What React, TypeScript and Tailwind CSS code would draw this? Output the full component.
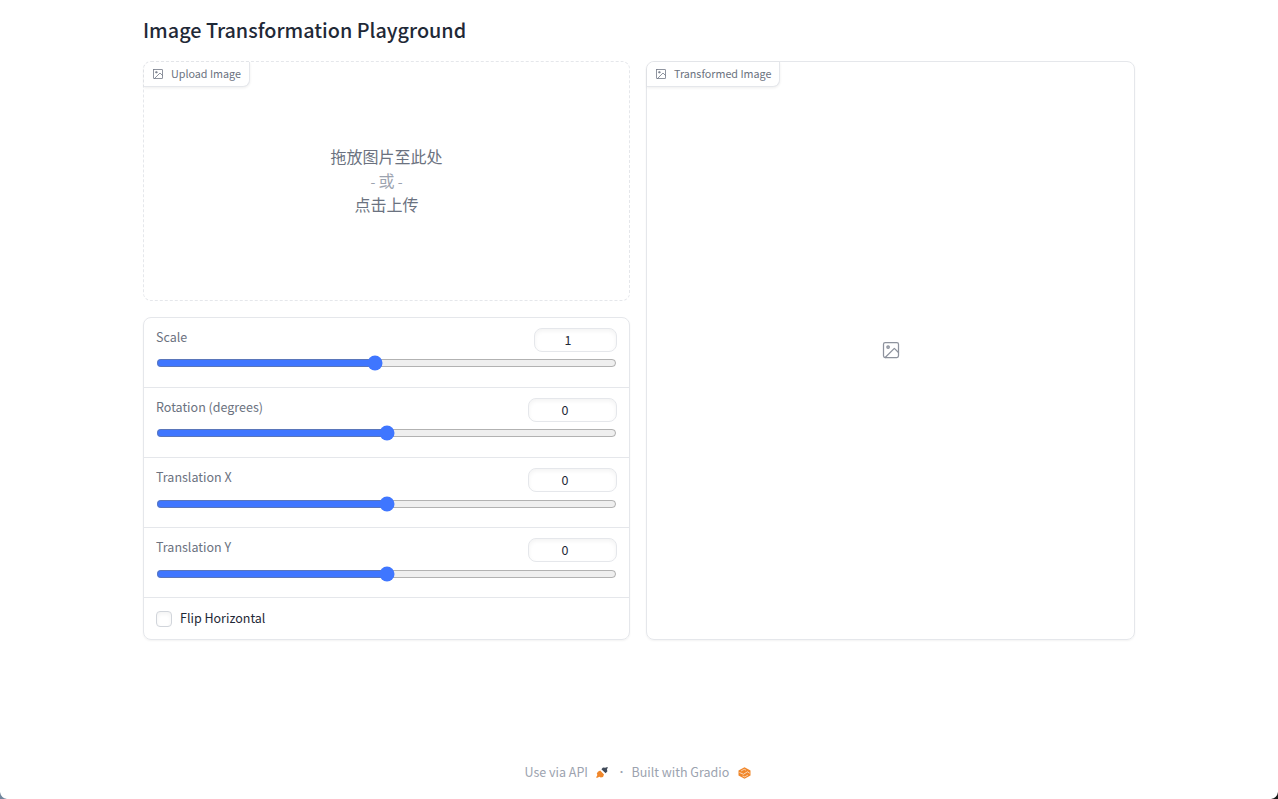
import React from 'react';

function ImageIcon({ className, radius = 2 }: { className: string; radius?: number }) {
  return (
    <svg
      className={className}
      viewBox="0 0 24 24"
      fill="none"
      stroke="currentColor"
      strokeWidth="1.5"
      strokeLinecap="round"
      strokeLinejoin="round"
    >
      <rect x="3" y="3" width="18" height="18" rx={radius} ry={radius} />
      <circle cx="8.5" cy="8.5" r="1.5" fill="currentColor" fillOpacity="0.5" />
      <polyline points="21 15 16 10 5 21" />
    </svg>
  );
}

function BlockLabel({ text, width }: { text: string; width: string }) {
  return (
    <div
      className={`${width} flex h-[25px] items-center rounded-tl-[7px] rounded-br-[7px] border-r border-b border-[#e5e7eb] bg-white pl-[8px] text-[#6b7280] shadow-[0_1px_3px_0_rgba(0,0,0,0.07)]`}
    >
      <ImageIcon className="mr-[7px] mb-[1px] size-[12px] text-[#6b7280]" radius={0.5} />
      <span className="text-[10.75px] leading-[18px] whitespace-nowrap">{text}</span>
    </div>
  );
}

interface SliderProps {
  label: string;
  min: number;
  max: number;
  step: number;
  value: number;
  boxWidth: string;
  gap: string;
}

function SliderRow({ label, min, max, step, value, boxWidth, gap }: SliderProps) {
  return (
    <div className="h-[70px] border-b border-[#e5e7eb] px-[12px] pt-[10px]">
      <div className="flex h-[24px] justify-between">
        <label className="text-[12.5px] leading-[17px] text-[#6b7280]">{label}</label>
        <input
          type="number"
          defaultValue={value}
          className={`${boxWidth} h-[24px] rounded-[8px] border border-[#e5e7eb] bg-white px-[8px] pb-[2px] text-center text-[12.5px] leading-[18px] text-[#1f2937] shadow-[inset_0_2px_4px_0_rgba(0,0,0,0.05)] outline-none`}
        />
      </div>
      <input
        type="range"
        min={min}
        max={max}
        step={step}
        defaultValue={value}
        className={`${gap} block h-[16px] w-[461px] accent-[#3f76ff]`}
      />
    </div>
  );
}

function RocketIcon() {
  return (
    <svg className="mt-[1px] ml-[7px] h-[11px] w-[12px]" viewBox="0 0 12 11">
      <path d="M5.4 2.2 L7 0.4 L9.2 0.8 L11.4 0 L11.8 0.6 L10.9 2.4 L11.4 4.2 L9.6 6.2 Z" fill="#374151" fillOpacity="0.95" />
      <path d="M1.9 4.8 L4.2 3.6 L8 7.4 L7 9.9 L4.8 10.5 L3.4 9.8 L0.8 10.9 L0.2 10.3 L1.4 8 L0.8 6.4 Z" fill="#f0872b" />
    </svg>
  );
}

function GradioIcon() {
  return (
    <svg className="mt-[1px] ml-[7px] h-[12px] w-[13px]" viewBox="0 0 26 24" fill="none">
      <path d="M13 0.5 L25 7 V17 L13 23.5 L1 17 V7 Z" fill="#f0872b" />
      <path d="M6 8 L12.5 4.6 L16 6.4" stroke="#fff" strokeWidth="1.4" strokeOpacity="0.85" />
      <path d="M3 11 L11 14.5 L19 9.5 L23.5 12.5" stroke="#fff" strokeWidth="1.6" strokeOpacity="0.85" />
      <path d="M9 18 L13.5 19.8 L20 16" stroke="#fff" strokeWidth="1.4" strokeOpacity="0.85" />
    </svg>
  );
}

const sliders: SliderProps[] = [
  { label: 'Scale', min: 0.1, max: 2, step: 0.1, value: 1, boxWidth: 'w-[83px]', gap: 'mt-[3px]' },
  { label: 'Rotation (degrees)', min: -180, max: 180, step: 1, value: 0, boxWidth: 'w-[89px]', gap: 'mt-[3px]' },
  { label: 'Translation X', min: -300, max: 300, step: 10, value: 0, boxWidth: 'w-[89px]', gap: 'mt-[4px]' },
  { label: 'Translation Y', min: -300, max: 300, step: 10, value: 0, boxWidth: 'w-[89px]', gap: 'mt-[4px]' },
];

export default function App() {
  return (
    <div className="relative flex h-[799px] w-[1278px] flex-col overflow-hidden bg-white font-['Noto_Sans_CJK_SC',sans-serif]">
      <main className="ml-[143px] w-[992px] pt-[15px]">
        <h1 className="h-[46px] text-[19.8px] leading-[29px] font-medium text-[#1f2937]">
          Image Transformation Playground
        </h1>
        <div className="flex gap-[16px]">
          <section className="flex w-[487px] flex-col gap-[16px]">
            <div className="h-[240px] rounded-[8px] border border-dashed border-[#e5e7eb]">
              <BlockLabel text="Upload Image" width="w-[106px]" />
              <div className="mt-[57px] text-center text-[16px] text-[#6b7280]">
                <div className="h-[24px] leading-[24px]">拖放图片至此处</div>
                <div className="h-[24px] leading-[24px] text-[#9ca3af]">
                  <span className="text-[14px]">- </span>或<span className="text-[14px]"> -</span>
                </div>
                <div className="h-[24px] leading-[24px]">点击上传</div>
              </div>
            </div>
            <div className="h-[323px] rounded-[8px] border border-[#e5e7eb] shadow-[0_1px_2px_0_rgba(0,0,0,0.05)]">
              {sliders.map((s) => (
                <SliderRow key={s.label} {...s} />
              ))}
              <label className="flex h-[41px] items-center pl-[12px]">
                <span className="mt-[1px] size-[16px] rounded-[4px] border border-[#d1d5db] bg-white shadow-[inset_0_2px_4px_0_rgba(0,0,0,0.05)]" />
                <span className="mb-[2px] ml-[8px] text-[12.5px] leading-[20px] text-[#1f2937]">Flip Horizontal</span>
              </label>
            </div>
          </section>
          <section className="flex h-[579px] w-[489px] flex-col rounded-[8px] border border-[#e5e7eb] shadow-[0_1px_2px_0_rgba(0,0,0,0.05)]">
            <BlockLabel text="Transformed Image" width="w-[133px]" />
            <div className="flex h-[526px] items-center justify-center text-[#8d929d]">
              <ImageIcon className="size-[20px]" />
            </div>
          </section>
        </div>
      </main>
      <footer className="mt-[122px] ml-[524.5px] flex h-[20px] items-center text-[12.5px] leading-[20px] text-[#9ca3af]">
        <span className="w-[64px] whitespace-nowrap">Use via API</span>
        <RocketIcon />
        <span className="ml-[8.5px] w-[11px] text-center text-[10px]">·</span>
        <span className="ml-[4.5px] w-[99px] whitespace-nowrap">Built with Gradio</span>
        <GradioIcon />
      </footer>
      <svg className="absolute bottom-0 left-0 size-[8px]" viewBox="0 0 8 8">
        <path d="M0 1 Q1 7 7 8 L0 8 Z" fill="#71869d" />
      </svg>
      <svg className="absolute right-0 bottom-0 size-[8px]" viewBox="0 0 8 8">
        <path d="M8 1 Q7 7 1 8 L8 8 Z" fill="#1a1a1a" />
      </svg>
    </div>
  );
}
